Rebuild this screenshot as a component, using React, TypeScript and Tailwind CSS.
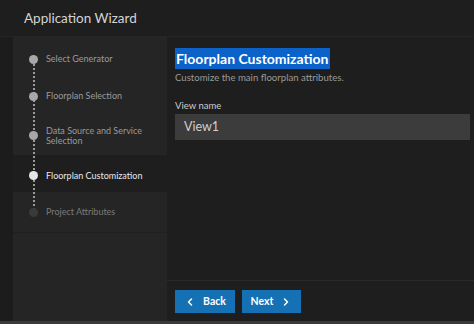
import { ChevronLeft, ChevronRight } from 'lucide-react';

type StepState = 'done' | 'active' | 'todo';

interface Step {
  label: string[];
  state: StepState;
  box: string;
}

const steps: Step[] = [
  { label: ['Select Generator'], state: 'done', box: 'h-[41px] pt-[3px]' },
  { label: ['Floorplan Selection'], state: 'done', box: 'h-[38px] pb-[2px]' },
  { label: ['Data Source and Service', 'Selection'], state: 'done', box: 'h-[39px]' },
  { label: ['Floorplan Customization'], state: 'active', box: 'h-[37px] pt-[4px]' },
  { label: ['Project Attributes'], state: 'todo', box: 'h-[40px]' },
];

function StepRow({ step }: { step: Step }) {
  const active = step.state === 'active';
  const dot =
    step.state === 'active' ? 'bg-[#e6e6e6]' : step.state === 'done' ? 'bg-[#a8a8a8]' : 'bg-[#3a3a3a]';
  const text =
    step.state === 'active' ? 'text-[#e8e8e8]' : step.state === 'done' ? 'text-[#9a9a9a]' : 'text-[#7a7a7a]';
  return (
    <div
      className={`flex items-center pl-[16px] w-[154px] ${step.box} ${
        active ? 'bg-[#1e1e1e]' : 'bg-[#252526]'
      }`}
    >
      <span className={`relative z-10 w-[9px] h-[9px] rounded-full shrink-0 ${dot}`} />
      <span className={`relative z-10 ml-[8px] text-[9px] leading-[10px] ${text}`}>
        {step.label.map((l) => (
          <span key={l} className="block">
            {l}
          </span>
        ))}
      </span>
    </div>
  );
}

export default function App() {
  return (
    <div
      className="w-[474px] h-[324px] bg-[#1e1e1e] flex flex-col overflow-hidden"
      style={{ fontFamily: 'Lato, "Open Sans", sans-serif' }}
    >
      <div className="h-[37px] shrink-0 flex items-center pl-[24px] border-b border-[#262626]">
        <span className="text-[13.5px] text-[#d4d4d4]">Application Wizard</span>
      </div>

      <div className="flex flex-1 pl-[13px] bg-[#1c1c1c]">
        <div className="w-[154px] flex flex-col bg-[#252526] relative">
          {steps.map((s) => (
            <StepRow key={s.label[0]} step={s} />
          ))}
          <div className="flex-1 border-t border-[#1f1f1f]" />
          <div className="absolute z-[5] left-[20px] top-[24px] h-[152px] border-l-2 border-dotted border-[#9a9a9a]" />
        </div>

        <div className="flex-1 flex flex-col bg-[#1e1e1e]">
          <div className="flex-1 pl-[8px] pr-[4px] pt-[9px]">
            <div className="inline-block bg-[#0b63c9] px-[1px] h-[21px] leading-[21px] text-white text-[14px] font-bold">
              Floorplan Customization
            </div>
            <div className="text-[9.6px] text-[#9a9a9a] mt-[1px] leading-[14px]">
              Customize the main floorplan attributes.
            </div>
            <div className="text-[9.5px] text-[#cccccc] mt-[15px] leading-[12px]">View name</div>
            <div className="mt-[2px] h-[26px] bg-[#3c3c3c] flex items-center pl-[9px] text-[12.5px] text-[#d0d0d0]">
              View1
            </div>
          </div>
          <div className="h-[41px] shrink-0 border-t border-[#2a2a2a] flex items-start pt-[9px] pl-[8px] gap-[7px]">
            <button className="h-[23px] w-[60px] bg-[#1570b4] text-white text-[10.5px] font-bold flex items-center justify-center gap-[7px]">
              <ChevronLeft size={12} strokeWidth={3} />
              Back
            </button>
            <button className="h-[23px] w-[59px] bg-[#1570b4] text-white text-[10.5px] font-bold flex items-center justify-center gap-[7px]">
              Next
              <ChevronRight size={12} strokeWidth={3} />
            </button>
          </div>
        </div>
      </div>
      <div className="h-[3px] shrink-0 bg-[#3a3a3a]" />
    </div>
  );
}
